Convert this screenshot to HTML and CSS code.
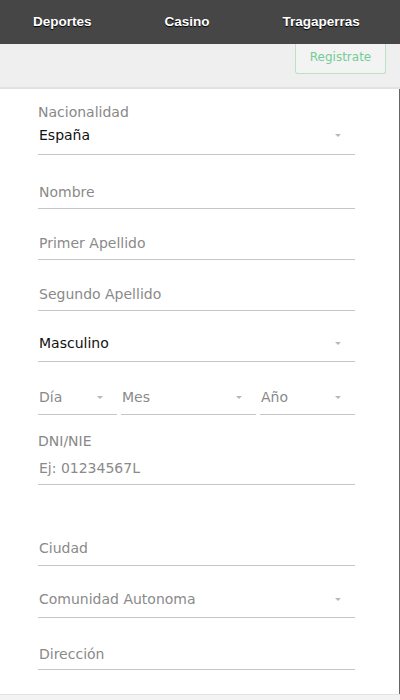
FILE: index.html
```html
<!DOCTYPE html>
<html lang="es">
<head>
    <meta charset="UTF-8">
    <meta name="viewport" content="width=device-width, initial-scale=1.0">
    <title>Registro</title>
    <link rel="stylesheet" href="styles.css">
</head>
<body>
    <!-- menú superior -->
    <nav class="top-nav">
        <a href="#" class="nav-link">Deportes</a>
        <a href="#" class="nav-link">Casino</a>
        <a href="#" class="nav-link">Tragaperras</a>
    </nav>

    <div class="sub-bar">
        <a href="#" class="btn-register">Registrate</a>
    </div>

    <!-- formulario de registro -->
    <div class="form">
        <div class="field field-first">
            <div class="label">Nacionalidad</div>
            <div class="control select value nat">España <span class="arrow"></span></div>
        </div>

        <div class="field">
            <div class="control name">Nombre</div>
        </div>
        <div class="field">
            <div class="control">Primer Apellido</div>
        </div>
        <div class="field">
            <div class="control">Segundo Apellido</div>
        </div>

        <div class="field">
            <div class="control select value gender">Masculino <span class="arrow"></span></div>
        </div>

        <div class="field date-row">
            <div class="control select">Día <span class="arrow"></span></div>
            <div class="control select">Mes <span class="arrow"></span></div>
            <div class="control select">Año <span class="arrow"></span></div>
        </div>

        <div class="field field-dni">
            <div class="label">DNI/NIE</div>
            <div class="control dni">Ej: 01234567L</div>
        </div>

        <div class="field field-city">
            <div class="control">Ciudad</div>
        </div>
        <div class="field">
            <div class="control select region">Comunidad Autonoma <span class="arrow"></span></div>
        </div>
        <div class="field">
            <div class="control address">Dirección</div>
        </div>
    </div>

    <div class="bottom"></div>
</body>
</html>
```

FILE: styles.css
```css
* {
    margin: 0;
    padding: 0;
    box-sizing: border-box;
}

body {
    background: #fff;
    font-family: 'DejaVu Sans', Verdana, sans-serif;
    font-size: 14px;
}

/* menú superior */
.top-nav {
    height: 44px;
    background: #464646;
    display: flex;
    gap: 73px;
    padding-left: 33px;
    position: relative;
    z-index: 2;
}

.nav-link {
    font-family: 'Liberation Sans', Arial, sans-serif;
    font-size: 13.5px;
    font-weight: bold;
    line-height: 44px;
    color: #fff;
    text-decoration: none;
    text-shadow: 0 1px 1px #000;
}

.sub-bar {
    height: 45px;
    background: #efefef;
    border-bottom: 2px solid #e2e2e2;
    display: flex;
    justify-content: flex-end;
    padding-right: 14px;
}

.btn-register {
    width: 91px;
    height: 30px;
    border: 1px solid #b9e2c7;
    border-top: 0;
    border-radius: 0 0 3px 3px;
    background: #f3f3f3;
    color: #74cd95;
    font-size: 12px;
    line-height: 26px;
    text-align: center;
    text-decoration: none;
}

/* formulario */
.form {
    padding: 0 45px 24px 38px;
    border-right: 1px solid #666;
}

.field {
    width: 317px;
}

.label {
    line-height: 17px;
    color: #888;
}

.control {
    line-height: 17px;
    padding: 26px 0 7px 1px;
    border-bottom: 1px solid #c6c6c6;
    color: #8a8a8a;
    white-space: nowrap;
}

.value {
    color: #111;
}

.select {
    display: flex;
    align-items: center;
    justify-content: space-between;
    padding-right: 14px;
}

.arrow {
    width: 0;
    height: 0;
    border-left: 3px solid transparent;
    border-right: 3px solid transparent;
    border-top: 3px solid #b8b8b8;
}

.field-first {
    padding-top: 15px;
}

.nat {
    padding-top: 6px;
    padding-bottom: 10px;
}

.name {
    padding-top: 29px;
}

.gender {
    padding-top: 24px;
    padding-bottom: 9px;
}

.date-row {
    display: grid;
    grid-template-columns: 79px 135px 1fr;
    gap: 4px;
}

.date-row .control {
    padding-top: 27px;
    padding-bottom: 8px;
}

.field-dni {
    padding-top: 18px;
}

.dni {
    padding-top: 10px;
}

.field-city .control {
    padding-top: 55px;
    padding-bottom: 8px;
}

.region {
    padding-top: 25px;
    padding-bottom: 9px;
}

.address {
    padding-top: 28px;
    padding-bottom: 6px;
}

.bottom {
    height: 40px;
    background: #f3f3f3;
    border-top: 1px solid #e4e4e4;
}
```
